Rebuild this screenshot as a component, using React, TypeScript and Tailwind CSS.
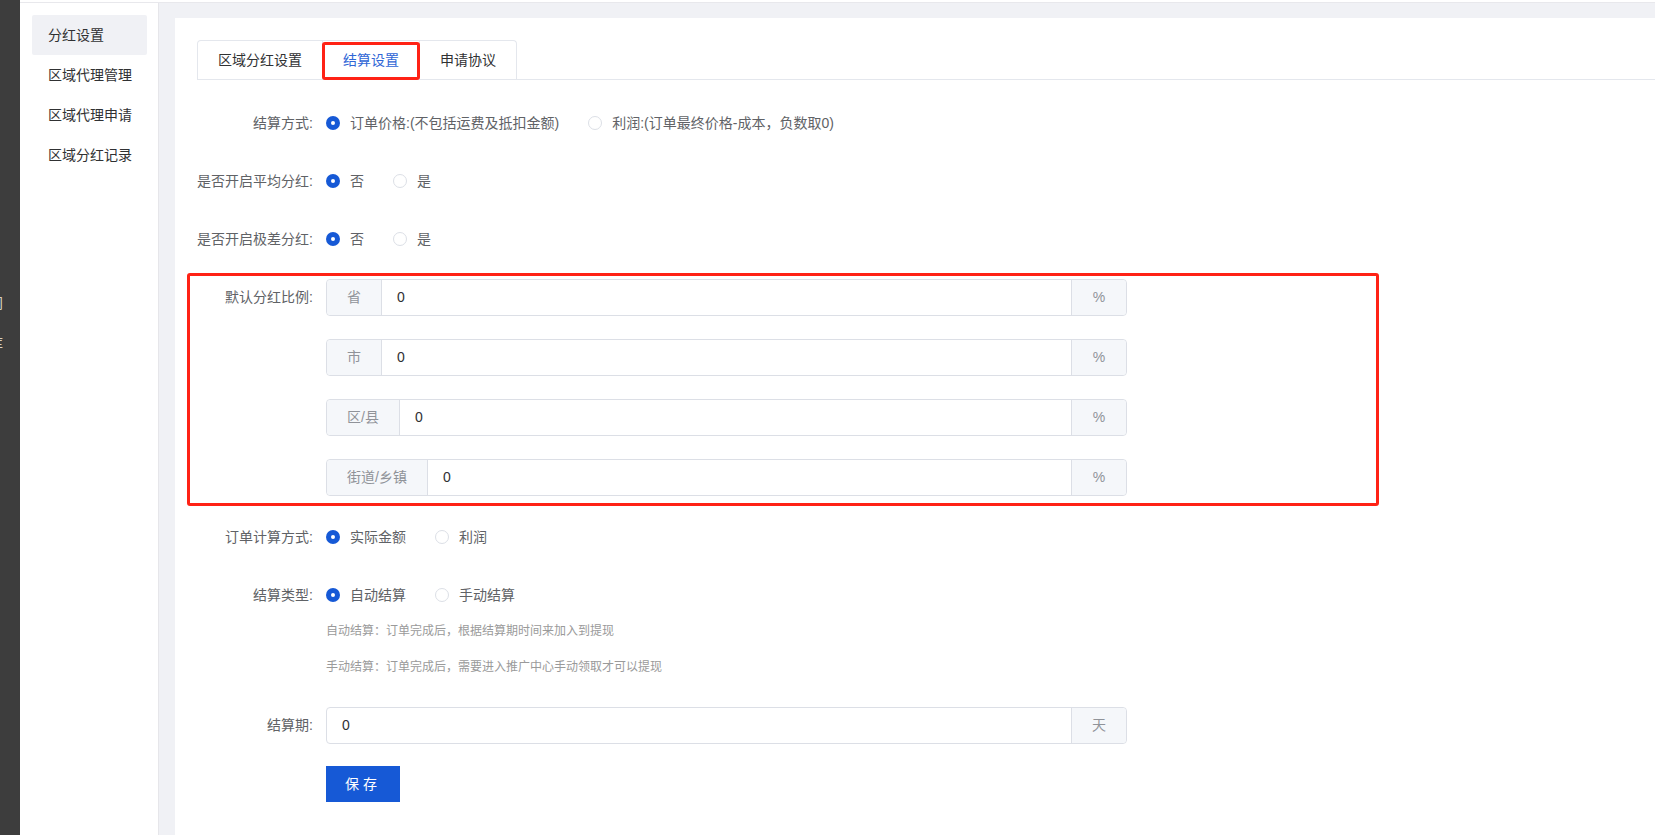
import type { ReactNode } from "react";

const FONT = { fontFamily: '"Liberation Sans", "Noto Sans CJK SC", sans-serif' };

const menuItems = ["分红设置", "区域代理管理", "区域代理申请", "区域分红记录"];

const ratioRows = [
  { label: "省", value: "0" },
  { label: "市", value: "0" },
  { label: "区/县", value: "0" },
  { label: "街道/乡镇", value: "0" },
];

type RadioOption = { label: string; checked?: boolean };

function Radio({ label, checked }: RadioOption) {
  return (
    <label className="mr-[29px] flex items-center text-[14px] text-[#606266]">
      {checked ? (
        <span className="flex h-[14px] w-[14px] items-center justify-center rounded-full bg-[#1659d6]">
          <span className="h-[4px] w-[4px] rounded-full bg-white" />
        </span>
      ) : (
        <span className="h-[14px] w-[14px] rounded-full border border-[#dcdfe6] bg-white" />
      )}
      <span className="pl-[10px]">{label}</span>
    </label>
  );
}

function FormRow({
  label,
  children,
  className = "",
}: {
  label?: string;
  children: ReactNode;
  className?: string;
}) {
  return (
    <div className={`flex items-center ${className}`}>
      <div className="w-[129px] shrink-0 pr-[13px] text-right text-[14px] text-[#606266]">
        {label}
      </div>
      <div className="flex items-center">{children}</div>
    </div>
  );
}

function InputGroup({
  prepend,
  append,
  value,
}: {
  prepend?: string;
  append: string;
  value: string;
}) {
  return (
    <div className="flex h-[37px] w-[801px] rounded-[4px] border border-[#dcdfe6] text-[14px]">
      {prepend && (
        <div className="flex items-center rounded-l-[4px] border-r border-[#dcdfe6] bg-[#f5f7fa] px-5 text-[#909399]">
          {prepend}
        </div>
      )}
      <div className="flex flex-1 items-center px-[15px] text-[#303133]">{value}</div>
      <div className="flex w-[55px] items-center justify-center rounded-r-[4px] border-l border-[#dcdfe6] bg-[#f5f7fa] text-[#909399]">
        {append}
      </div>
    </div>
  );
}

export default function App() {
  return (
    <div className="flex h-[835px] w-full overflow-hidden bg-white" style={FONT}>
      {/* 左侧深色栏（被截断） */}
      <div className="flex w-[20px] shrink-0 flex-col overflow-hidden bg-[#3d3d3d] pt-[293px] text-[14px] leading-[20px] text-[#d9d2c2]">
        <div className="flex">
          <span className="-ml-[11px] whitespace-nowrap">间</span>
        </div>
        <div className="mt-[20px] flex">
          <span className="-ml-[11px] whitespace-nowrap">库</span>
        </div>
      </div>

      <div className="flex flex-1 flex-col">
        <div className="h-[3px] border-b border-[#e8e8ec] bg-white" />
        <div className="flex flex-1">
          {/* 二级菜单 */}
          <aside className="w-[139px] shrink-0 border-r border-[#e6e6ea] bg-white pl-[12px] pr-[11px] pt-[12px]">
            {menuItems.map((item, i) => (
              <div
                key={item}
                className={`flex h-[40px] items-center rounded-[2px] pl-[16px] text-[14px] text-[#303133] ${
                  i === 0 ? "bg-[#f0f1f5]" : ""
                }`}
              >
                {item}
              </div>
            ))}
          </aside>

          <main className="flex flex-1 bg-[#f0f1f5] pl-[16px] pt-[15px]">
            <div className="flex-1 bg-white pl-[22px] pt-[22px]">
              {/* 标签页 */}
              <div className="flex h-[40px] border-b border-[#e4e7ed]">
                <div className="flex rounded-t-[4px] border border-b-0 border-[#e4e7ed] text-[14px]">
                  <div className="flex h-[39px] items-center px-5 text-[#303133]">区域分红设置</div>
                  <div className="relative flex h-[39px] items-center border-l border-[#e4e7ed] px-5 text-[#2f66d6]">
                    结算设置
                    <div className="absolute -left-px top-px bottom-0 -right-px rounded-[3px] border-[3px] border-[#ff2215]" />
                  </div>
                  <div className="flex h-[39px] items-center border-l border-[#e4e7ed] px-5 text-[#303133]">申请协议</div>
                </div>
              </div>

              {/* 表单 */}
              <div className="flex flex-col pt-[25px]">
                <FormRow label="结算方式:" className="h-[36px]">
                  <Radio label="订单价格:(不包括运费及抵扣金额)" checked />
                  <Radio label="利润:(订单最终价格-成本，负数取0)" />
                </FormRow>
                <FormRow label="是否开启平均分红:" className="mt-[22px] h-[36px]">
                  <Radio label="否" checked />
                  <Radio label="是" />
                </FormRow>
                <FormRow label="是否开启极差分红:" className="mt-[22px] h-[36px]">
                  <Radio label="否" checked />
                  <Radio label="是" />
                </FormRow>

                <div className="-ml-[10px] mt-[16px] w-[1192px] rounded-[3px] border-[3px] border-[#ff2215] pb-[7px] pl-[7px] pt-[3px]">
                  {ratioRows.map((row, i) => (
                    <FormRow
                      key={row.label}
                      label={i === 0 ? "默认分红比例:" : ""}
                      className={i === 0 ? "" : "mt-[23px]"}
                    >
                      <InputGroup prepend={row.label} append="%" value={row.value} />
                    </FormRow>
                  ))}
                </div>

                <FormRow label="订单计算方式:" className="mt-[13px] h-[36px]">
                  <Radio label="实际金额" checked />
                  <Radio label="利润" />
                </FormRow>
                <FormRow label="结算类型:" className="mt-[22px] h-[36px]">
                  <Radio label="自动结算" checked />
                  <Radio label="手动结算" />
                </FormRow>
                <div className="ml-[129px] mt-[8px] flex flex-col text-[12px] leading-[20px] text-[#9a9a9a]">
                  <div>自动结算：订单完成后，根据结算期时间来加入到提现</div>
                  <div className="mt-[16px]">手动结算：订单完成后，需要进入推广中心手动领取才可以提现</div>
                </div>

                <FormRow label="结算期:" className="mt-[30px]">
                  <InputGroup append="天" value="0" />
                </FormRow>

                <div className="ml-[129px] mt-[22px]">
                  <button className="h-[36px] w-[74px] bg-[#1659d6] text-[14px] tracking-[4px] text-white">
                    保存
                  </button>
                </div>
              </div>
            </div>
          </main>
        </div>
      </div>
    </div>
  );
}
